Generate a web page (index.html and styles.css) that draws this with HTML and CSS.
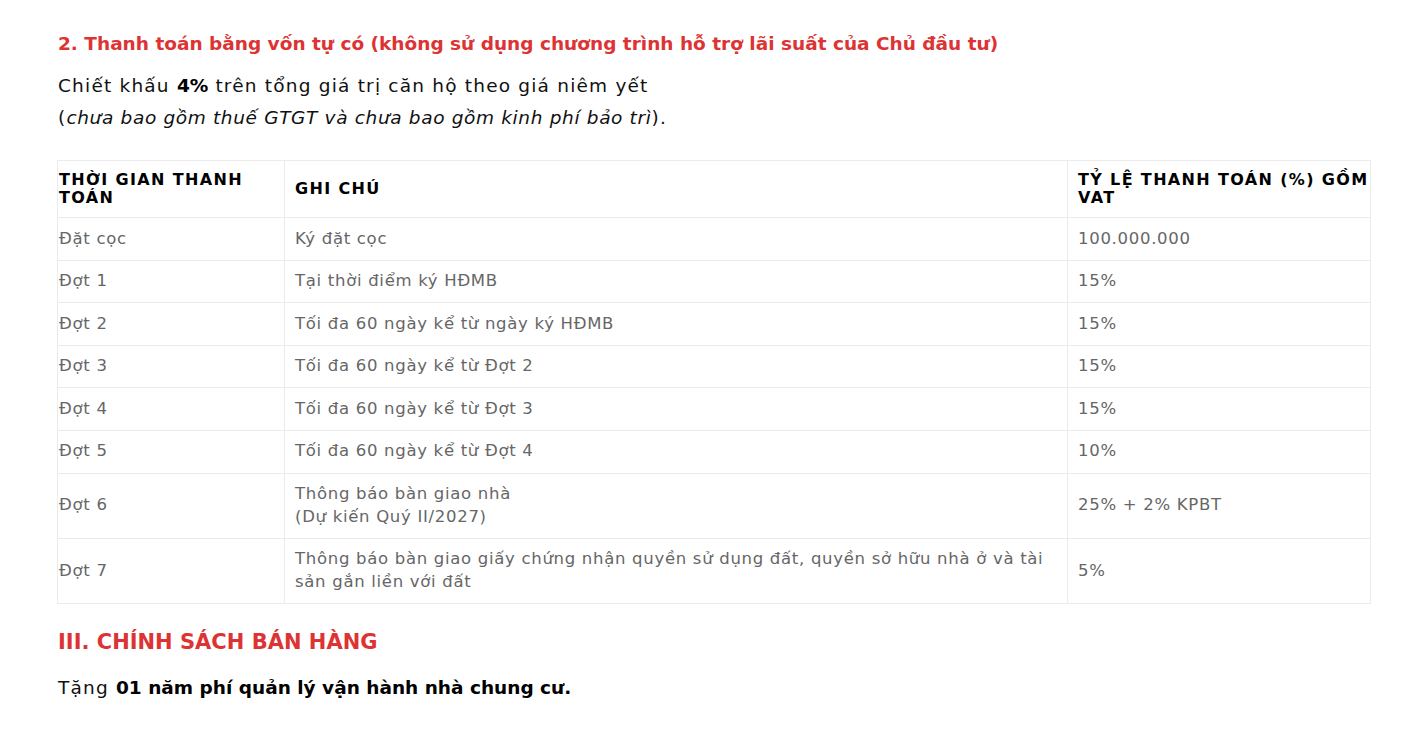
FILE: index.html
```html
<!DOCTYPE html>
<html lang="vi">
<head>
<meta charset="utf-8">
<title>Chính sách thanh toán</title>
<link rel="stylesheet" href="styles.css">
</head>
<body>
<main class="content">
  <h3 class="sub-title">2. Thanh toán bằng vốn tự có (không sử dụng chương trình hỗ trợ lãi suất của Chủ đầu tư)</h3>
  <p class="lead">Chiết khấu <strong>4%</strong> trên tổng giá trị căn hộ theo giá niêm yết<br>(<em>chưa bao gồm thuế GTGT và chưa bao gồm kinh phí bảo trì</em>).</p>
  <table class="pay-table">
    <colgroup>
      <col class="c1">
      <col class="c2">
      <col class="c3">
    </colgroup>
    <thead>
      <tr>
        <th>Thời gian thanh toán</th>
        <th>Ghi chú</th>
        <th>Tỷ lệ thanh toán (%) gồm VAT</th>
      </tr>
    </thead>
    <tbody>
      <tr><td>Đặt cọc</td><td>Ký đặt cọc</td><td>100.000.000</td></tr>
      <tr><td>Đợt 1</td><td>Tại thời điểm ký HĐMB</td><td>15%</td></tr>
      <tr><td>Đợt 2</td><td>Tối đa 60 ngày kể từ ngày ký HĐMB</td><td>15%</td></tr>
      <tr><td>Đợt 3</td><td>Tối đa 60 ngày kể từ Đợt 2</td><td>15%</td></tr>
      <tr><td>Đợt 4</td><td>Tối đa 60 ngày kể từ Đợt 3</td><td>15%</td></tr>
      <tr><td>Đợt 5</td><td>Tối đa 60 ngày kể từ Đợt 4</td><td>10%</td></tr>
      <tr><td>Đợt 6</td><td>Thông báo bàn giao nhà<br>(Dự kiến Quý II/2027)</td><td>25% + 2% KPBT</td></tr>
      <tr><td>Đợt 7</td><td>Thông báo bàn giao giấy chứng nhận quyền sử dụng đất, quyền sở hữu nhà ở và tài sản gắn liền với đất</td><td>5%</td></tr>
    </tbody>
  </table>
  <h2 class="section-title">III. CHÍNH SÁCH BÁN HÀNG</h2>
  <p class="lead">Tặng <strong>01 năm phí quản lý vận hành nhà chung cư.</strong></p>
</main>
</body>
</html>
```

FILE: styles.css
```css
html, body {
  margin: 0;
  padding: 0;
  background: #fff;
}
body {
  font-family: "DejaVu Sans", "Noto Sans", sans-serif;
  color: #111;
}
.content {
  width: 1313px;
  padding: 29px 0 0 57px;
}
.sub-title {
  margin: 0 0 11px 1px;
  font-size: 18.5px;
  line-height: 30px;
  font-weight: 700;
  color: #dd3333;
}
.lead {
  margin: 0 0 26px 1px;
  font-size: 18.5px;
  line-height: 32px;
  letter-spacing: 1.2px;
  color: #111;
}
.lead em {
  letter-spacing: 0.65px;
}
.lead strong {
  font-weight: 700;
  color: #000;
  letter-spacing: 0;
}
.pay-table {
  width: 1313px;
  border-collapse: collapse;
  table-layout: fixed;
  border: 1px solid #ebebeb;
}
.c1 { width: 227px; }
.c2 { width: 783px; }
.c3 { width: 303px; }
.pay-table th,
.pay-table td {
  border: 1px solid #ebebeb;
  text-align: left;
  vertical-align: middle;
  padding: 10px 10px;
}
.pay-table th {
  font-size: 16px;
  line-height: 18px;
  font-weight: 700;
  text-transform: uppercase;
  letter-spacing: 1.35px;
  color: #000;
}
.pay-table td {
  font-size: 16.5px;
  line-height: 22.6px;
  letter-spacing: 0.7px;
  padding-top: 9.5px;
  padding-bottom: 9.5px;
  color: #666;
}
.pay-table th:first-child,
.pay-table td:first-child {
  padding-left: 1px;
}
.pay-table th:last-child,
.pay-table td:last-child {
  padding-right: 0;
}
.section-title {
  margin: 23px 0 15px 1px;
  font-size: 21px;
  line-height: 30px;
  font-weight: 700;
  color: #dd3333;
}
```
